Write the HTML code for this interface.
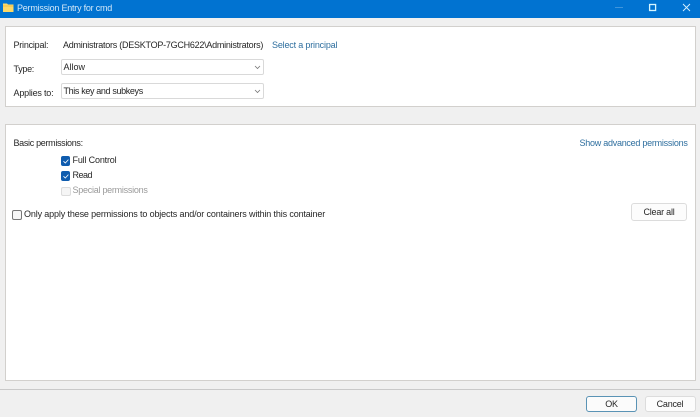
<!DOCTYPE html>
<html>
<head>
<meta charset="utf-8">
<style>
html,body{margin:0;padding:0;}
body{width:700px;height:417px;position:relative;overflow:hidden;background:#f0f0f0;font-family:"Liberation Sans",sans-serif;font-size:9px;letter-spacing:-.22px;color:#262626;}
div{position:absolute;box-sizing:border-box;white-space:nowrap;}
.t{line-height:12px;height:12px;}
.link{color:#2f6f9f;}
.panel{background:#fff;border:1px solid #d2d0cd;}
.sel{left:61px;width:203px;height:16px;background:#fff;border:1px solid #d9d9d9;border-radius:2px;line-height:15px;padding-left:1.5px;}
.cb{width:9.5px;height:9.5px;border-radius:2px;}
.on{background:#0f5cae;}
.btn{background:#fcfcfc;border:1px solid #dcdcdc;border-radius:3px;text-align:center;}
svg{position:absolute;display:block;}
</style>
</head>
<body>
<div style="left:0;top:0;width:700px;height:18px;background:#0173d1;"></div>
<svg style="left:3px;top:3px" width="11" height="10" viewBox="0 0 11 10"><path d="M0 0.5h4l1 1h5.5v7.5H0z" fill="#fbd968"/><path d="M0 2.5h10.5v1H0z" fill="#eec04a"/></svg>
<div class="t" style="left:17px;top:2px;color:#d3e8f8;letter-spacing:-.23px;">Permission Entry for cmd</div>
<svg style="left:610px;top:0" width="90" height="18" viewBox="0 0 90 18"><path d="M5 7.5h8" stroke="#3f95dc" stroke-width="1"/><rect x="39.6" y="4.5" width="6" height="6" fill="none" stroke="#d6f5ff" stroke-width="1.3"/><path d="M73 4l7 7M80 4l-7 7" stroke="#d6f0ff" stroke-width=".9"/></svg>

<div class="panel" style="left:5px;top:26px;width:691px;height:81px;"></div>
<div class="t" style="left:13.5px;top:39px;">Principal:</div>
<div class="t" style="left:63px;top:39px;letter-spacing:-.25px;">Administrators (DESKTOP-7GCH622\Administrators)</div>
<div class="t link" style="left:272px;top:39px;letter-spacing:-.18px;">Select a principal</div>
<div class="t" style="left:13.5px;top:62.5px;letter-spacing:-.3px;">Type:</div>
<div class="sel" style="top:59px;letter-spacing:0;">Allow</div>
<svg style="left:253.5px;top:65px" width="7" height="5" viewBox="0 0 7 5"><path d="M1 1l2.5 2.5L6 1" fill="none" stroke="#777" stroke-width=".8"/></svg>
<div class="t" style="left:13.5px;top:87px;letter-spacing:-.19px;">Applies to:</div>
<div class="sel" style="top:83px;letter-spacing:-.36px;">This key and subkeys</div>
<svg style="left:253.5px;top:89px" width="7" height="5" viewBox="0 0 7 5"><path d="M1 1l2.5 2.5L6 1" fill="none" stroke="#777" stroke-width=".8"/></svg>

<div class="panel" style="left:5px;top:124px;width:691px;height:257px;"></div>
<div class="t" style="left:13.5px;top:137px;letter-spacing:-.32px;">Basic permissions:</div>
<div class="t link" style="left:579.5px;top:137px;letter-spacing:-.26px;">Show advanced permissions</div>

<div class="cb on" style="left:60.5px;top:156px;"></div>
<svg style="left:60.5px;top:156px" width="10" height="10" viewBox="0 0 10 10"><path d="M2.5 5.2l1.8 1.8 3.1-3.4" fill="none" stroke="#fff" stroke-width=".8"/></svg>
<div class="t" style="left:72.5px;top:154px;letter-spacing:-.17px;">Full Control</div>
<div class="cb on" style="left:60.5px;top:171px;"></div>
<svg style="left:60.5px;top:171px" width="10" height="10" viewBox="0 0 10 10"><path d="M2.5 5.2l1.8 1.8 3.1-3.4" fill="none" stroke="#fff" stroke-width=".8"/></svg>
<div class="t" style="left:72.5px;top:169px;letter-spacing:-.5px;">Read</div>
<div class="cb" style="left:61px;top:186.5px;background:#f5f5f5;border:1px solid #dcdcdc;"></div>
<div class="t" style="left:72.5px;top:184px;color:#9a9a9a;letter-spacing:-.26px;">Special permissions</div>

<div class="cb" style="left:12px;top:210px;width:10px;height:10px;background:#f6f6f6;border:1px solid #777;"></div>
<div class="t" style="left:24px;top:208px;letter-spacing:-.14px;">Only apply these permissions to objects and/or containers within this container</div>

<div class="btn" style="left:631px;top:203px;width:56px;height:17.5px;line-height:17px;">Clear all</div>

<div style="left:0;top:389px;width:700px;height:1px;background:#c9c9c9;"></div>
<div class="btn" style="left:586px;top:396px;width:51px;height:15.5px;line-height:15px;border:1px solid #5a93b5;background:#fbfbfb;">OK</div>
<div class="btn" style="left:644.5px;top:396px;width:51px;height:15.5px;line-height:15px;">Cancel</div>
</body>
</html>
